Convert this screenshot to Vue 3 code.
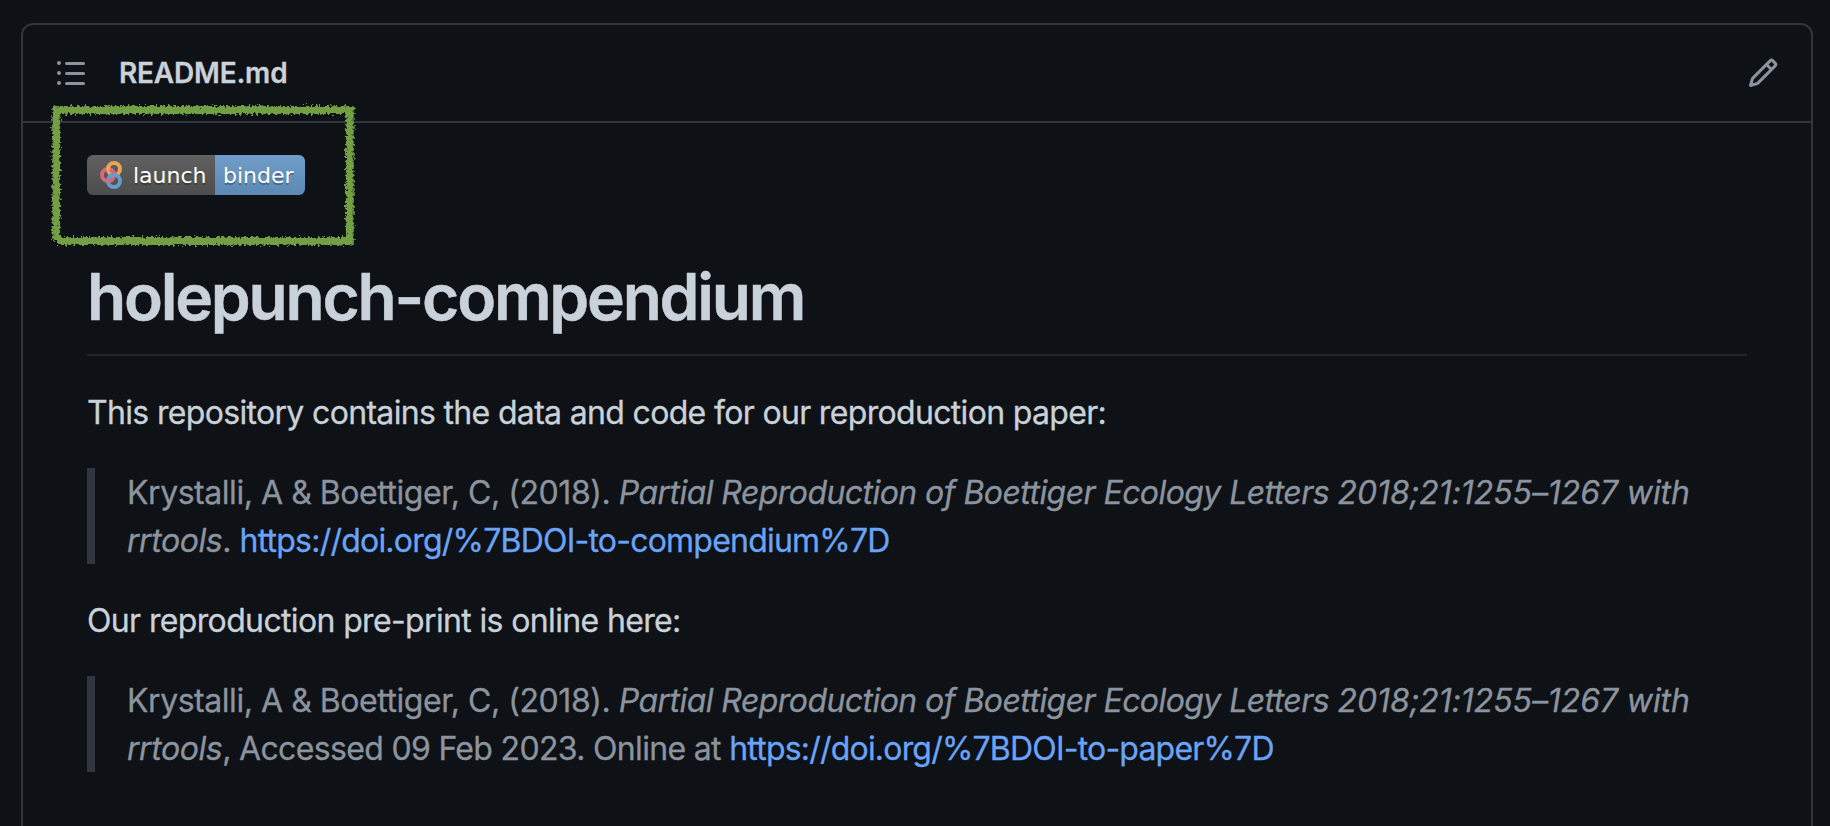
<script setup>
const citation = 'Krystalli, A & Boettiger, C, (2018). '
const title = 'Partial Reproduction of Boettiger Ecology Letters '
const issue = '2018;21:1255'
const pages = '–1267 with'
</script>

<template>
  <main class="page">
    <section class="panel">
      <header class="bar">
        <svg class="icon" viewBox="0 0 16 16"><path fill-rule="evenodd" d="M2 4a1 1 0 100-2 1 1 0 000 2zm3.75-1.5a.75.75 0 000 1.5h8.5a.75.75 0 000-1.5h-8.5zm0 5a.75.75 0 000 1.5h8.5a.75.75 0 000-1.5h-8.5zm0 5a.75.75 0 000 1.5h8.5a.75.75 0 000-1.5h-8.5zM3 8a1 1 0 11-2 0 1 1 0 012 0zm-1 6a1 1 0 100-2 1 1 0 000 2z" /></svg>
        <span class="file">README.md</span>
        <svg class="icon edit" viewBox="0 0 16 16"><path fill-rule="evenodd" d="M11.013 1.427a1.75 1.75 0 012.474 0l1.086 1.086a1.75 1.75 0 010 2.474l-8.61 8.61c-.21.21-.47.364-.756.445l-3.251.93a.75.75 0 01-.927-.928l.929-3.25a1.75 1.75 0 01.445-.758l8.61-8.61zm1.414 1.06a.25.25 0 00-.354 0L10.811 3.75l1.439 1.44 1.263-1.263a.25.25 0 000-.354l-1.086-1.086zM11.189 6.25L9.75 4.81l-6.286 6.287a.25.25 0 00-.064.108l-.558 1.953 1.953-.558a.249.249 0 00.108-.064l6.286-6.286z" /></svg>
      </header>
      <article class="body">
        <a class="badge">
          <span class="left">
            <svg class="logo" viewBox="0 0 28 28" fill="none" stroke-width="4">
              <circle cx="11" cy="14" r="6" stroke="#db667c" />
              <circle cx="17" cy="8" r="6" stroke="#e9a457" />
              <path d="M13 8.4A6 6 0 0 1 17 14" stroke="#db667c" />
              <circle cx="17" cy="20" r="6" stroke="#669bcb" />
              <path d="M16 17.3A6 6 0 0 1 11 20" stroke="#db667c" />
              <path d="M12 16.7A6 6 0 0 1 17 14" stroke="#669bcb" />
            </svg>
            <span class="launch">launch</span>
          </span>
          <span class="right">binder</span>
        </a>
        <h1>holepunch-compendium</h1>
        <p class="p1">This repository contains the data and code for our reproduction paper:</p>
        <blockquote>
          <div><span class="cite">{{ citation }}</span><em><span class="title">{{ title }}</span><span class="issue">{{ issue }}</span><span class="pages">{{ pages }}</span></em></div>
          <div><em class="tools">rrtools</em><span class="dot">. </span><a class="link1">https://doi.org/%7BDOI-to-compendium%7D</a></div>
        </blockquote>
        <p class="p2">Our reproduction pre-print is online here:</p>
        <blockquote>
          <div><span class="cite">{{ citation }}</span><em><span class="title">{{ title }}</span><span class="issue">{{ issue }}</span><span class="pages">{{ pages }}</span></em></div>
          <div><em class="tools">rrtools</em><span class="acc">, Accessed 09 Feb 2023. Online at </span><a class="link2">https://doi.org/%7BDOI-to-paper%7D</a></div>
        </blockquote>
      </article>
    </section>
    <svg class="marker" viewBox="0 0 320 160">
      <defs>
        <filter id="chalk" x="0" y="0" width="320" height="160" filterUnits="userSpaceOnUse" color-interpolation-filters="sRGB">
          <feTurbulence type="fractalNoise" baseFrequency="0.42" numOctaves="3" seed="7" result="n" />
          <feDisplacementMap in="SourceGraphic" in2="n" scale="7" xChannelSelector="R" yChannelSelector="G" />
        </filter>
      </defs>
      <path filter="url(#chalk)" d="M14.2 144V14H307.8V145H16" fill="none" stroke="#739f44" stroke-width="7.8" />
    </svg>
  </main>
</template>

<style>
html, body { margin: 0; background: #0e1116; overflow: hidden; }
</style>

<style scoped>
.page { position: relative; box-sizing: border-box; width: 1830px; height: 826px; padding: 23px 17px 0 21px; overflow: hidden; background: #0e1116; font-family: Inter, "Liberation Sans", sans-serif; color: #c9d1d9; }
.panel { box-sizing: border-box; height: 840px; border: 2px solid #30363d; border-radius: 12px; }
.bar { display: flex; align-items: center; box-sizing: border-box; height: 98px; padding: 0 32px; border-bottom: 2px solid #30363d; }
.icon { width: 32px; height: 32px; fill: #8b949e; flex: none; }
.edit { margin-left: auto; }
.file { margin-left: 32px; font-size: 28px; font-weight: 600; letter-spacing: -.2px; -webkit-text-stroke: .3px; }
.body { padding: 32px 64px 0; }
.badge { display: flex; width: 218px; height: 40px; border-radius: 6px; overflow: hidden; font: 22px/41px "DejaVu Sans", sans-serif; color: #fff; text-shadow: 0 2px 0 rgba(1, 1, 1, .3); }
.left { display: flex; width: 128px; background: linear-gradient(#606060, #4d4d4d); }
.logo { width: 28px; height: 28px; margin: 6px 8px 0 10px; }
.right { flex: 1; padding-left: 8px; background: linear-gradient(#719dc9, #5c88b4); }
h1 { box-sizing: border-box; margin: 60px 0 32px; padding-top: 2px; height: 101px; border-bottom: 2px solid #21262d; font-size: 64px; line-height: 80px; font-weight: 600; letter-spacing: -2.22px; white-space: nowrap; -webkit-text-stroke: .5px; }
p, blockquote { box-sizing: border-box; padding-top: 1px; font-size: 32px; line-height: 48px; white-space: pre; -webkit-text-stroke: .3px; }
p { height: 48px; margin: 0 0 32px; }
blockquote { height: 96px; margin: 0 0 32px; padding-left: 32px; border-left: 8px solid #30363d; color: #8b949e; }
blockquote a { color: #6aa4f8; }
.p1 { letter-spacing: -.667px; }
.p2 { letter-spacing: -.64px; }
.cite { letter-spacing: -.454px; }
.title { letter-spacing: -.57px; }
.issue { letter-spacing: -.06px; }
.pages { letter-spacing: -.1px; }
.tools, .dot { letter-spacing: -.45px; }
.link1 { letter-spacing: -.778px; }
.acc { letter-spacing: -.67px; }
.link2 { letter-spacing: -.8px; }
.marker { position: absolute; left: 42px; top: 96px; width: 320px; height: 160px; }
</style>
